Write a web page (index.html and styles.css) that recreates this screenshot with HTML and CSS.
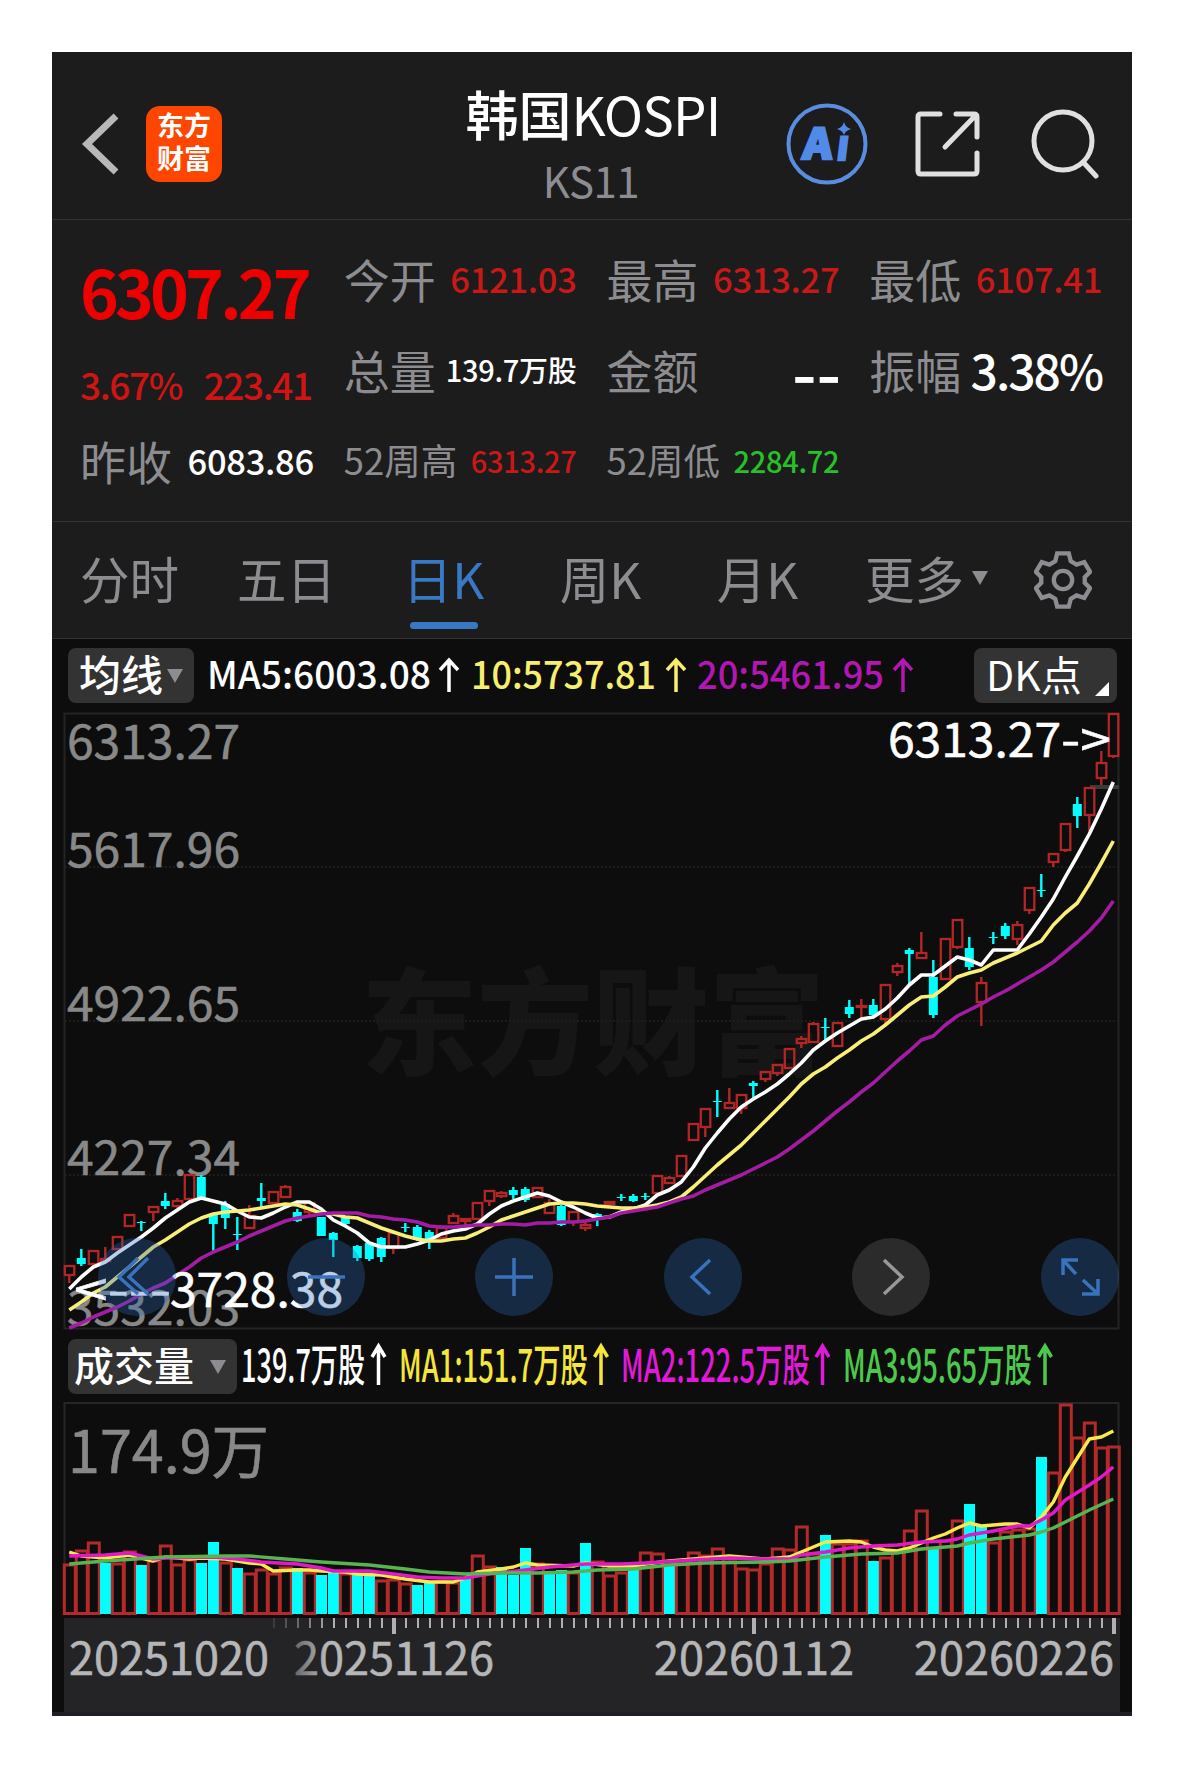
FILE: index.html
```html
<!DOCTYPE html>
<html lang="zh-CN">
<head>
    <meta charset="UTF-8">
    <meta name="viewport" content="width=device-width, initial-scale=1.0">
    <title>韩国KOSPI KS11</title>
    <link rel="stylesheet" href="styles.css">
</head>
<body>
    <div class="app">
        <!-- Top bar -->
        <header class="topbar">
            <div class="topbar-left">
                <svg class="icon-back" viewBox="0 0 40 64"><path d="M36 4 L7 32 L36 60"/></svg>
                <div class="logo"><span>东方</span><span>财富</span></div>
            </div>
            <div class="topbar-title">
                <h1>韩国<span>KOSPI</span></h1>
                <p>KS11</p>
            </div>
            <div class="topbar-right">
                <svg class="icon-ai" viewBox="0 0 82 82">
                    <circle cx="41" cy="41" r="38.5"/>
                    <text transform="translate(16 56) skewX(-5)" textLength="29" lengthAdjust="spacingAndGlyphs">A</text>
                    <text transform="translate(50 57) skewX(-7)" textLength="11" lengthAdjust="spacingAndGlyphs">ı</text>
                    <path d="M58 19 Q59.500 24.500 65 26 Q59.500 27.500 58 32 Q56.500 27.500 51 26 Q56.500 24.500 58 19Z"/>
                </svg>
                <svg class="icon-share" viewBox="0 0 68 68">
                    <path d="M26 4 H7 Q4 4 4 7 V61 Q4 64 7 64 H60 Q63 64 63 61 V43"/>
                    <path d="M42 4 H60 Q63 4 63 7 V27 M62 5 L31 37"/>
                </svg>
                <svg class="icon-search" viewBox="0 0 70 70"><circle cx="32" cy="32" r="29"/><path d="M52 53 L65 67"/></svg>
            </div>
        </header>

        <!-- Quote summary -->
        <section class="quote">
            <div class="quote-main">
                <div class="price">6307.27</div>
                <div class="change"><span>3.67%</span><span>223.41</span></div>
                <div class="cell"><span class="label">昨收</span><span class="val white">6083.86</span></div>
            </div>
            <div class="quote-col">
                <div class="cell"><span class="label">今开</span><span class="val red">6121.03</span></div>
                <div class="cell"><span class="label">总量</span><span class="val white small">139.7万股</span></div>
                <div class="cell"><span class="label label-sm">52周高</span><span class="val red small">6313.27</span></div>
            </div>
            <div class="quote-col">
                <div class="cell"><span class="label">最高</span><span class="val red">6313.27</span></div>
                <div class="cell"><span class="label">金额</span><span class="val white dashes">--</span></div>
                <div class="cell"><span class="label label-sm">52周低</span><span class="val green small">2284.72</span></div>
            </div>
            <div class="quote-col">
                <div class="cell"><span class="label">最低</span><span class="val red">6107.41</span></div>
                <div class="cell"><span class="label">振幅</span><span class="val white large">3.38%</span></div>
            </div>
        </section>

        <!-- Period tabs -->
        <nav class="tabs">
            <div class="tab">分时</div>
            <div class="tab">五日</div>
            <div class="tab active">日K</div>
            <div class="tab">周K</div>
            <div class="tab">月K</div>
            <div class="tab tab-more">更多<i class="caret"></i></div>
            <div class="tab-settings">
                <svg class="icon-gear" viewBox="0 0 60 60">
                    <path d="M24 2.500 H36 L38 10.500 L44 14 L52 11.500 L58 21.500 L52.500 27 V33 L58 38.500 L52 48.500 L44 46 L38 49.500 L36 57.500 H24 L22 49.500 L16 46 L8 48.500 L2 38.500 L7.500 33 V27 L2 21.500 L8 11.500 L16 14 L22 10.500 Z"/>
                    <circle cx="30" cy="30" r="9.500"/>
                </svg>
            </div>
        </nav>

        <!-- Price chart -->
        <div class="legend legend-ma">
            <div class="btn btn-ma"><span>均线</span><i class="caret"></i></div>
            <svg class="legend-text" viewBox="200 639 720 69">
                <g font-size="38">
                    <text x="207" y="689" fill="#fff" textLength="224" lengthAdjust="spacingAndGlyphs">MA5:6003.08</text>
                    <text x="471" y="689" fill="#f7ee70" textLength="185" lengthAdjust="spacingAndGlyphs">10:5737.81</text>
                    <text x="697" y="689" fill="#b316b3" textLength="187" lengthAdjust="spacingAndGlyphs">20:5461.95</text>
                </g>
                <path class="arrow" stroke="#fff" d="M449 692 V661 M440 670 L449 660 L458 670"/>
                <path class="arrow" stroke="#f7ee70" d="M676 692 V661 M667 670 L676 660 L685 670"/>
                <path class="arrow" stroke="#b316b3" d="M903 692 V661 M894 670 L903 660 L912 670"/>
            </svg>
            <div class="btn btn-dk"><span>DK点</span></div>
        </div>
        <div class="chart">
            <svg id="priceChart" viewBox="52 708 1080 625"></svg>
            <div class="controls">
                <button class="ctrl"><svg viewBox="0 0 78 78"><path d="M50 20 L31 39 L50 56 M40 20 L21 39 L40 56"/></svg></button>
                <button class="ctrl"><svg viewBox="0 0 78 78"><path d="M21 39 H58"/></svg></button>
                <button class="ctrl"><svg viewBox="0 0 78 78"><path d="M20 39 H58 M39 20 V58"/></svg></button>
                <button class="ctrl"><svg viewBox="0 0 78 78"><path d="M46 22 L28 39 L46 56"/></svg></button>
                <button class="ctrl disabled"><svg viewBox="0 0 78 78"><path d="M32 22 L50 39 L32 56"/></svg></button>
                <button class="ctrl"><svg viewBox="0 0 78 78"><path d="M22 37 V22 H37 M22 22 L35 36 M57 41 V56 H41 M57 56 L42 42"/></svg></button>
            </div>
        </div>

        <!-- Volume chart -->
        <div class="legend legend-vol">
            <div class="btn btn-vol"><span>成交量</span><i class="caret"></i></div>
            <svg class="legend-text" viewBox="240 1333 820 65">
                <g font-size="45">
                    <text x="241" y="1382" fill="#fff" textLength="124" lengthAdjust="spacingAndGlyphs">139.7万股</text>
                    <text x="399" y="1382" fill="#f5e63c" textLength="189" lengthAdjust="spacingAndGlyphs">MA1:151.7万股</text>
                    <text x="621" y="1382" fill="#e01ad8" textLength="189" lengthAdjust="spacingAndGlyphs">MA2:122.5万股</text>
                    <text x="843" y="1382" fill="#4cc94c" textLength="189" lengthAdjust="spacingAndGlyphs">MA3:95.65万股</text>
                </g>
                <path class="arrow" stroke="#fff" d="M378.500 1385 V1346 M372 1357 L378.500 1346 L385 1357"/>
                <path class="arrow" stroke="#f5e63c" d="M601 1385 V1346 M594.500 1357 L601 1346 L607.500 1357"/>
                <path class="arrow" stroke="#e01ad8" d="M822.500 1385 V1346 M816 1357 L822.500 1346 L829 1357"/>
                <path class="arrow" stroke="#4cc94c" d="M1045 1385 V1346 M1038.500 1357 L1045 1346 L1051.500 1357"/>
            </svg>
        </div>
        <svg id="volumeChart" viewBox="52 1398 1080 220"></svg>
        <svg id="dateAxis" viewBox="52 1618 1080 94"></svg>
        <div class="bottom-strip"></div>
    </div>

    <script src="chart.js"></script>
</body>
</html>
```
FILE: styles.css
```css
* {
    box-sizing: border-box;
}

body {
    margin: 0;
    padding: 52px;
    background: #fff;
    font-family: "Noto Sans CJK SC", "Noto Sans", sans-serif;
}

svg {
    display: block;
}

.app {
    width: 1080px;
    height: 1664px;
    background: #0d0d0d;
    overflow: hidden;
}

/* Top bar */
.topbar {
    display: grid;
    grid-template-columns: 1fr auto 1fr;
    height: 168px;
    background: #1c1c1c;
    border-bottom: 1px solid #333335;
}

.topbar-left {
    display: flex;
    align-items: center;
    gap: 26px;
    padding: 16px 0 0 28px;
}

.icon-back {
    width: 40px;
    height: 64px;
    fill: none;
    stroke: #b8b8b8;
    stroke-width: 7;
}

.logo {
    display: flex;
    flex-direction: column;
    align-items: center;
    justify-content: center;
    width: 76px;
    height: 76px;
    padding-bottom: 5px;
    border-radius: 14px;
    background: #ff4600;
    color: #fff;
    font-size: 27px;
    font-weight: 700;
    line-height: 33px;
}

.topbar-title {
    text-align: center;
    padding: 28px 0 0 2px;
}

.topbar-title h1 {
    margin: 0;
    color: #fff;
    font-size: 53px;
    font-weight: 500;
    line-height: 66px;
}

.topbar-title h1 span {
    font-weight: 400;
    letter-spacing: -0.8px;
}

.topbar-title p {
    margin: 5px 4px 0 0;
    color: #8c8c91;
    font-size: 42px;
    line-height: 58px;
    letter-spacing: -0.5px;
}

.topbar-right {
    display: flex;
    align-items: center;
    justify-content: flex-end;
    padding: 17px 31px 0 0;
}

.icon-ai {
    width: 82px;
    height: 82px;
    margin-right: 46px;
    fill: #528ae8;
    font-weight: 900;
    font-size: 42px;
}

.icon-ai text {
    stroke: #528ae8;
    stroke-width: 2.5;
}

.icon-ai circle {
    fill: none;
    stroke: #5a8ce0;
    stroke-width: 4;
}

.icon-share,
.icon-search {
    fill: none;
    stroke: #e0e0e0;
    stroke-width: 5;
    stroke-linecap: round;
}

.icon-share {
    width: 68px;
    height: 68px;
    margin-right: 49px;
}

.icon-search {
    width: 70px;
    height: 70px;
}

/* Quote summary */
.quote {
    display: flex;
    height: 302px;
    padding: 12px 0 0 30px;
    background: #1c1c1c;
    border-bottom: 1px solid #333335;
}

.quote-main {
    width: 232px;
    margin-right: 30px;
}

.quote-main .label {
    margin-left: -2px;
}

.quote-col {
    width: 233px;
    margin-right: 30px;
}

.cell {
    display: flex;
    align-items: center;
    justify-content: space-between;
    height: 91px;
    white-space: nowrap;
}

.price {
    height: 121px;
    margin-left: -2px;
    color: #ee0000;
    font-size: 66px;
    font-weight: 700;
    line-height: 116px;
    letter-spacing: -3.9px;
}

.change {
    display: flex;
    justify-content: space-between;
    height: 61px;
    margin-left: -2px;
    padding-right: 2px;
    color: #d01414;
    font-size: 37px;
    font-weight: 500;
    line-height: 62px;
    letter-spacing: -1.4px;
}

.label {
    color: #8c8c91;
    font-size: 46px;
}

.label-sm {
    font-size: 36.5px;
}

.val {
    font-size: 34.5px;
    font-weight: 500;
    letter-spacing: -0.3px;
}

.val.small {
    font-size: 29px;
}

.val.large {
    font-size: 48px;
    letter-spacing: -2px;
}

.val.dashes {
    margin-right: -2px;
    font-size: 69px;
    line-height: 80px;
    letter-spacing: 0;
}

.red {
    color: #c81818;
}

.white {
    color: #fff;
}

.green {
    color: #28c028;
}

/* Period tabs */
.tabs {
    display: flex;
    height: 117px;
    background: #1c1c1c;
    border-bottom: 1px solid #333335;
}

.tab {
    display: flex;
    position: relative;
    align-items: center;
    justify-content: center;
    width: 157px;
    padding: 0 2px 5px 0;
    color: #8c8c91;
    font-size: 49.5px;
}

.tab.active {
    color: #3a78c4;
}

.tab.active::after {
    content: "";
    position: absolute;
    left: 44px;
    bottom: 9px;
    width: 68px;
    height: 7px;
    border-radius: 4px;
    background: #3a78c4;
}

.caret {
    border: 8.5px solid transparent;
    border-top: 14px solid #8c8c91;
    border-bottom: 0;
}

.tab-more {
    padding-left: 24px;
    white-space: nowrap;
}

.tab .caret {
    margin-left: 8px;
}

.tab-settings {
    display: flex;
    flex: 1;
    align-items: center;
    justify-content: center;
}

.icon-gear {
    width: 58px;
    height: 58px;
    fill: none;
    stroke: #8c8c91;
    stroke-width: 4.5;
}

/* Chart legends */
.legend {
    display: flex;
    padding: 0 15px 0 16px;
}

.legend-ma {
    height: 69px;
}

.legend-vol {
    height: 65px;
}

.btn {
    display: flex;
    align-items: center;
    height: 55px;
    border-radius: 8px;
    background: #333;
    color: #fff;
    font-weight: 500;
    white-space: nowrap;
}

.btn span {
    padding-bottom: 6px;
}

.btn-ma {
    width: 126px;
    margin-top: 9px;
    padding-left: 11px;
    font-size: 42px;
}

.btn-ma .caret {
    margin-left: 4px;
}

.btn-dk {
    position: relative;
    width: 143px;
    margin: 9px 0 0 auto;
    padding-left: 12px;
    font-size: 41px;
    font-weight: 400;
}

.btn-dk::after {
    content: "";
    position: absolute;
    right: 8px;
    bottom: 7px;
    border-left: 14px solid transparent;
    border-bottom: 14px solid #fff;
}

.btn-vol {
    width: 169px;
    margin-top: 6px;
    padding-left: 6px;
    font-size: 40px;
}

.btn-vol .caret {
    margin-left: 16px;
}

.legend-ma .legend-text {
    width: 720px;
    height: 69px;
    margin-left: 6px;
}

.legend-vol .legend-text {
    width: 820px;
    height: 65px;
    margin-left: 3px;
}

.legend-text {
    font-weight: 500;
}

.arrow {
    fill: none;
    stroke-width: 3.5;
}

/* Charts */
.chart {
    position: relative;
    height: 625px;
}

#priceChart {
    width: 1080px;
    height: 625px;
}

#volumeChart {
    width: 1080px;
    height: 220px;
}

#dateAxis {
    width: 1080px;
    height: 94px;
}

.watermark {
    fill: #161616;
    font-weight: 900;
    font-size: 116px;
}

.controls {
    position: absolute;
    left: 46px;
    right: 13px;
    bottom: 17px;
    display: flex;
    justify-content: space-between;
}

.ctrl {
    width: 78px;
    height: 78px;
    padding: 0;
    border: 0;
    border-radius: 50%;
    background: rgba(47, 107, 182, 0.32);
}

.ctrl svg {
    width: 78px;
    height: 78px;
    fill: none;
    stroke: #3873bc;
    stroke-width: 3.5;
}

.ctrl.disabled {
    background: #2b2b2b;
}

.ctrl.disabled svg {
    stroke: #989898;
}

.bottom-strip {
    height: 4px;
    background: #1f1e24;
}
```
FILE: chart.js
```js
const UP = '#b32626';
const DOWN = '#00ffff';
const STEP = 12;
const FIRST_X = 69.3;

const xAt = (i) => FIRST_X + i * STEP;

// [direction, body top, body bottom, wick top, wick bottom]
const candles = [
    [1, 1266, 1275, 1265, 1283], [0, 1258, 1264, 1249, 1266], [1, 1251, 1264, 1251, 1266], [1, 1259, 1261, 1247, 1262],
    [1, 1237, 1249, 1236, 1250], [1, 1215, 1226, 1215, 1226], [0, 1222, 1223, 1221, 1231], [1, 1207, 1212, 1206, 1221],
    [0, 1201, 1206, 1193, 1209], [1, 1201, 1206, 1198, 1208], [1, 1175, 1199, 1175, 1199], [0, 1177, 1198, 1175, 1198],
    [0, 1214, 1224, 1213, 1252], [0, 1204, 1218, 1201, 1229], [0, 1234, 1235, 1217, 1250], [1, 1216, 1228, 1205, 1228],
    [0, 1198, 1201, 1183, 1209], [1, 1192, 1203, 1191, 1204], [1, 1187, 1197, 1185, 1198], [0, 1212, 1221, 1209, 1222],
    [1, 1203, 1212, 1203, 1215], [0, 1217, 1236, 1217, 1236], [0, 1233, 1240, 1232, 1257], [0, 1217, 1224, 1216, 1225],
    [0, 1246, 1258, 1245, 1261], [0, 1243, 1259, 1242, 1261], [0, 1238, 1257, 1237, 1262], [1, 1233, 1248, 1233, 1254],
    [0, 1227, 1228, 1223, 1232], [0, 1227, 1240, 1225, 1241], [0, 1232, 1241, 1230, 1249], [1, 1228, 1238, 1228, 1238],
    [1, 1216, 1223, 1213, 1224], [1, 1219, 1221, 1218, 1226], [1, 1203, 1219, 1203, 1219], [1, 1191, 1201, 1190, 1206],
    [1, 1193, 1196, 1191, 1198], [0, 1190, 1195, 1187, 1199], [0, 1189, 1200, 1187, 1202], [1, 1188, 1197, 1187, 1198],
    [1, 1203, 1213, 1199, 1213], [0, 1206, 1225, 1205, 1226], [1, 1212, 1222, 1212, 1226], [1, 1225, 1228, 1221, 1231],
    [0, 1214, 1217, 1213, 1226], [1, 1202, 1204, 1201, 1205], [0, 1197, 1198, 1194, 1201], [0, 1196, 1201, 1194, 1202],
    [0, 1196, 1197, 1193, 1200], [1, 1176, 1193, 1176, 1193], [1, 1178, 1183, 1176, 1184], [1, 1156, 1176, 1156, 1176],
    [1, 1124, 1140, 1123, 1140], [1, 1109, 1127, 1109, 1137], [0, 1101, 1102, 1090, 1117], [1, 1103, 1108, 1088, 1108],
    [1, 1095, 1108, 1095, 1114], [0, 1083, 1086, 1081, 1100], [1, 1072, 1079, 1071, 1082], [1, 1065, 1073, 1064, 1076],
    [1, 1049, 1068, 1048, 1068], [1, 1039, 1043, 1036, 1048], [1, 1024, 1042, 1022, 1042], [0, 1027, 1028, 1018, 1040],
    [1, 1023, 1046, 1023, 1046], [0, 1007, 1014, 1000, 1018], [1, 1006, 1007, 999, 1018], [0, 1005, 1015, 999, 1017],
    [1, 985, 1019, 984, 1025], [1, 966, 972, 963, 976], [0, 950, 954, 948, 986], [1, 953, 958, 932, 959],
    [0, 977, 1015, 960, 1018], [1, 939, 979, 938, 980], [1, 920, 947, 920, 949], [0, 948, 967, 937, 970],
    [1, 983, 1002, 977, 1026], [0, 937, 938, 932, 944], [0, 926, 936, 923, 939], [1, 925, 939, 921, 945],
    [1, 888, 910, 887, 914], [0, 890, 891, 874, 897], [1, 854, 862, 853, 867], [1, 824, 850, 823, 852],
    [0, 804, 816, 797, 828], [1, 788, 815, 788, 831], [1, 763, 778, 751, 785], [1, 714, 756, 714, 758]
];

const ma5 = [1289, 1277, 1267, 1262, 1253, 1245, 1237, 1228, 1218, 1210, 1202, 1198, 1201, 1204, 1211, 1217, 1218, 1213, 1207, 1202, 1202, 1209, 1220, 1226,
    1233, 1243, 1247, 1247, 1247, 1244, 1240, 1234, 1231, 1229, 1224, 1214, 1206, 1201, 1197, 1193, 1196, 1202, 1207, 1213, 1218, 1217, 1212, 1209, 1205, 1195,
    1190, 1182, 1167, 1148, 1133, 1119, 1107, 1099, 1092, 1084, 1074, 1063, 1050, 1041, 1033, 1026, 1019, 1017, 1009, 998, 985, 975, 975, 966, 957, 960, 965,
    950, 950, 950, 934, 917, 899, 877, 856, 834, 809, 782];

const ma10 = [1310, 1302, 1293, 1287, 1277, 1267, 1257, 1247, 1240, 1232, 1224, 1218, 1214, 1212, 1211, 1210, 1208, 1206, 1204, 1205, 1209, 1213, 1214, 1217,
    1218, 1223, 1228, 1232, 1236, 1239, 1241, 1241, 1239, 1238, 1233, 1227, 1220, 1216, 1212, 1208, 1204, 1203, 1203, 1204, 1206, 1207, 1208, 1208, 1207, 1205,
    1202, 1197, 1187, 1176, 1165, 1155, 1145, 1133, 1121, 1109, 1097, 1084, 1074, 1067, 1058, 1050, 1041, 1034, 1025, 1015, 1005, 997, 996, 987, 977, 973, 970,
    963, 958, 953, 947, 941, 925, 913, 903, 884, 863, 841];

const ma20 = [1328, 1323, 1317, 1312, 1307, 1301, 1294, 1288, 1283, 1275, 1267, 1258, 1252, 1247, 1242, 1236, 1231, 1226, 1221, 1218, 1216, 1214, 1213, 1213,
    1213, 1216, 1217, 1219, 1220, 1222, 1226, 1227, 1227, 1226, 1225, 1225, 1224, 1224, 1225, 1223, 1223, 1222, 1222, 1221, 1219, 1217, 1213, 1211, 1209, 1207,
    1203, 1199, 1196, 1190, 1185, 1180, 1175, 1169, 1163, 1157, 1149, 1140, 1131, 1121, 1111, 1102, 1092, 1083, 1072, 1061, 1051, 1040, 1036, 1025, 1016, 1010,
    1004, 997, 991, 984, 977, 970, 962, 952, 942, 931, 918, 901];

// Bar tops; negative means a falling day
const volumes = [1564, 1550, 1542, -1564, 1563, 1551, -1566, 1560, 1545, 1564, 1559, -1564, -1543, 1562, -1569, 1573, 1569, 1573, 1567, -1569, 1572, -1576,
    -1574, 1573, -1576, -1575, 1580, 1579, 1583, -1586, -1582, 1581, 1582, -1579, 1555, 1566, -1568, -1576, -1549, 1563, -1573, -1571, 1572, -1544, 1561, 1575,
    1572, -1569, 1552, 1553, -1566, 1563, 1552, 1555, 1548, 1561, 1568, 1569, 1563, 1548, 1549, 1526, 1553, -1536, 1543, 1543, 1540, -1562, 1557, 1551, 1530,
    1510, -1549, 1540, 1520, -1505, -1526, 1542, 1531, 1529, 1528, -1458, 1472, 1404, 1437, 1422, 1447, 1446];

// [bar index, y]
const volMa1 = [[0, 1552], [1, 1556], [3, 1558], [5, 1555], [6, 1558], [7, 1561], [8, 1557], [10, 1559], [11, 1558], [13, 1559], [14, 1561], [15, 1563],
    [16, 1564], [17, 1571], [19, 1570], [20, 1570], [21, 1571], [23, 1572], [24, 1574], [26, 1575], [27, 1577], [28, 1579], [30, 1582], [32, 1582], [33, 1578],
    [34, 1572], [36, 1569], [37, 1567], [38, 1563], [39, 1565], [42, 1566], [43, 1563], [45, 1566], [47, 1566], [48, 1564], [50, 1561], [52, 1559], [53, 1558],
    [55, 1556], [56, 1557], [58, 1559], [60, 1557], [61, 1552], [62, 1547], [63, 1542], [65, 1541], [66, 1542], [67, 1547], [68, 1550], [69, 1551], [70, 1548],
    [71, 1543], [72, 1538], [73, 1534], [74, 1528], [75, 1523], [76, 1526], [78, 1524], [79, 1524], [80, 1528], [81, 1517], [82, 1502], [83, 1477], [84, 1458],
    [85, 1439], [86, 1437], [87, 1431]];
const volMa2 = [[0, 1556], [3, 1555], [5, 1553], [6, 1556], [7, 1559], [8, 1558], [12, 1557], [14, 1559], [16, 1562], [19, 1564], [21, 1568], [22, 1571],
    [25, 1571], [27, 1574], [29, 1577], [31, 1578], [33, 1578], [35, 1574], [38, 1570], [40, 1567], [43, 1564], [46, 1564], [48, 1563], [52, 1560], [55, 1558],
    [58, 1559], [60, 1559], [61, 1555], [63, 1552], [65, 1548], [67, 1546], [69, 1545], [71, 1542], [73, 1541], [74, 1539], [75, 1535], [77, 1531], [79, 1526],
    [80, 1526], [81, 1520], [82, 1513], [83, 1500], [85, 1485], [86, 1477], [87, 1467]];
const volMa3 = [[0, 1564], [3, 1561], [8, 1557], [13, 1556], [15, 1556], [18, 1559], [21, 1562], [25, 1565], [28, 1569], [30, 1572], [33, 1574], [36, 1573],
    [39, 1573], [42, 1572], [44, 1570], [47, 1569], [50, 1565], [53, 1563], [58, 1562], [60, 1561], [63, 1557], [66, 1554], [69, 1553], [71, 1549], [74, 1546],
    [75, 1543], [77, 1539], [80, 1535], [81, 1532], [82, 1528], [83, 1522], [85, 1510], [87, 1499]];

function line(points, color, width) {
    const d = points.map(([i, y]) => `${xAt(i).toFixed(1)},${y}`).join(' ');
    return `<polyline points="${d}" fill="none" stroke="${color}" stroke-width="${width}" stroke-linejoin="round"/>`;
}

function label(text, x, y, width, size, color) {
    return `<text x="${x}" y="${y}" font-size="${size}" fill="${color}" stroke="${color}" stroke-width="0.6" textLength="${width}" lengthAdjust="spacingAndGlyphs">${text}</text>`;
}

function drawPrice() {
    let s = '<text class="watermark" x="361" y="1066" textLength="464">东方财富</text>';
    s += '<rect x="64.5" y="713.5" width="1054" height="615" fill="none" stroke="#242424" stroke-width="2"/>';
    [867, 1021, 1175].forEach((y) => {
        s += `<path d="M65 ${y} H1118" stroke="#1c1c1c" stroke-width="2" stroke-dasharray="2 2"/>`;
    });
    s += '<path d="M1090 787 H1119" stroke="#3a3a3a" stroke-width="4"/>';

    [['6313.27', 759], ['5617.96', 867], ['4922.65', 1021], ['4227.34', 1175], ['3532.03', 1325]].forEach(([t, y]) => {
        s += label(t, 67, y, 173, 47, '#888');
    });

    candles.forEach(([up, top, bottom, high, low], i) => {
        const x = xAt(i);
        if (up) {
            s += `<path d="M${x} ${high} V${top} M${x} ${bottom} V${low}" stroke="${UP}" stroke-width="2.4"/>`;
            s += `<rect x="${x - 4.5}" y="${top}" width="9.5" height="${bottom - top}" fill="none" stroke="${UP}" stroke-width="2.3"/>`;
        } else {
            s += `<path d="M${x} ${high} V${low}" stroke="${DOWN}" stroke-width="2.4"/>`;
            s += `<rect x="${x - 4.5}" y="${top}" width="9" height="${bottom - top}" fill="${DOWN}"/>`;
        }
    });

    s += line(ma5.map((y, i) => [i, y]), '#fff', 3.6);
    s += line(ma10.map((y, i) => [i, y]), '#f8ee78', 3.6);
    s += line(ma20.map((y, i) => [i, y]), '#a41ca4', 3.6);
    s += label('6313.27', 888, 757, 173, 47, '#fff');
    s += label('-&gt;', 1061, 757, 50, 47, '#fff');
    s += label('&lt;---', 74, 1307, 97, 47, '#fff');
    s += label('3728.38', 170, 1307, 173, 47, '#fff');
    document.getElementById('priceChart').innerHTML = s;
}

function drawVolume() {
    let s = '<path d="M64.5 1614 V1403 H1118.5 V1614" fill="none" stroke="#262626" stroke-width="2"/>';
    s += label('174.9万', 68, 1473, 201, 58, '#888');
    volumes.forEach((v, i) => {
        const x = xAt(i);
        const y = Math.abs(v);
        if (v > 0) {
            s += `<rect x="${x - 5}" y="${y + 1}" width="11" height="${1612.5 - y}" fill="none" stroke="#b42a2a" stroke-width="3"/>`;
        } else {
            s += `<rect x="${x - 5.3}" y="${y - 1}" width="11" height="${1615 - y}" fill="${DOWN}"/>`;
        }
    });
    s += line(volMa1, '#fbe94c', 3.4);
    s += line(volMa2, '#e01ac8', 3.4);
    s += line(volMa3, '#58b450', 3.4);
    document.getElementById('volumeChart').innerHTML = s;
}

function drawAxis() {
    let s = '<defs><linearGradient id="fade"><stop offset="0" stop-color="#66666a"/><stop offset="0.16" stop-color="#b6b6b8"/></linearGradient></defs>';
    s += '<rect x="64" y="1618" width="1056" height="94" fill="#242426"/>';
    for (let k = 0; k <= 70; k++) {
        const major = k % 30 === 0;
        const opacity = Math.min(1, (71 - k) / 6);
        s += `<path d="M${1114 - k * STEP} 1618 V${major ? 1634 : 1628}" stroke="#b0b0b2" stroke-width="${major ? 4 : 2}" opacity="${opacity}"/>`;
    }
    s += label('20251020', 69, 1675, 200, 45, '#b6b6b8');
    s += label('20251126', 294, 1675, 200, 45, 'url(#fade)');
    s += label('20260112', 654, 1675, 200, 45, '#b6b6b8');
    s += label('20260226', 914, 1675, 200, 45, '#b6b6b8');
    document.getElementById('dateAxis').innerHTML = s;
}

drawPrice();
drawVolume();
drawAxis();
```
